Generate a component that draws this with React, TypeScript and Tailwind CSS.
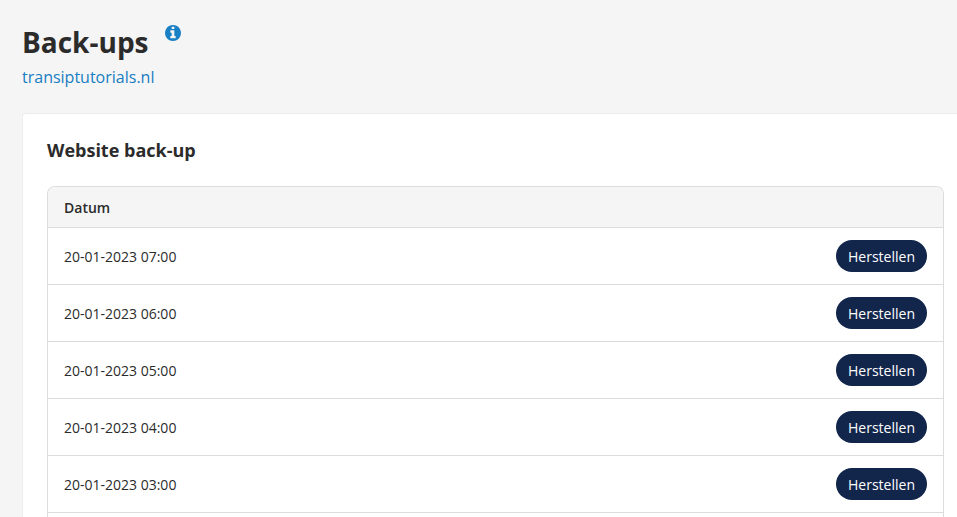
const backups = [
  '20-01-2023 07:00',
  '20-01-2023 06:00',
  '20-01-2023 05:00',
  '20-01-2023 04:00',
  '20-01-2023 03:00',
];

function InfoIcon() {
  return (
    <svg viewBox="0 128 1536 1536" className="size-4" fill="#1a80c6" aria-hidden="true">
      <path d="M1024 1376v-160q0-14-9-23t-23-9h-96v-512q0-14-9-23t-23-9h-320q-14 0-23 9t-9 23v160q0 14 9 23t23 9h96v320h-96q-14 0-23 9t-9 23v160q0 14 9 23t23 9h448q14 0 23-9t9-23zm-128-896v-160q0-14-9-23t-23-9h-192q-14 0-23 9t-9 23v160q0 14 9 23t23 9h192q14 0 23-9t9-23zm640 416q0 209-103 385.5t-279.5 279.5-385.5 103-385.5-103-279.5-279.5-103-385.5 103-385.5 279.5-279.5 385.5-103 385.5 103 279.5 279.5 103 385.5z" />
    </svg>
  );
}

export default function App() {
  return (
    <main className="flex min-h-screen flex-col bg-[#f5f5f5] pt-6 pl-[22px] font-['Open_Sans',sans-serif] text-[#2b2b2b]">
      <header>
        <div className="flex items-start gap-4">
          <h1 className="text-[28px] leading-9 font-bold">Back-ups</h1>
          <button type="button" aria-label="Informatie" className="mt-px">
            <InfoIcon />
          </button>
        </div>
        <a href="#" className="mt-[5px] inline-block text-base leading-6 text-[#187dc1]">
          transiptutorials.nl
        </a>
      </header>

      <section className="mt-6 flex flex-1 flex-col rounded-tl border-t border-l border-[#ececec] bg-white pt-6 pr-[13px] pl-6">
        <h2 className="text-lg leading-6 font-bold">Website back-up</h2>
        <div className="mt-6 flex-1 overflow-hidden rounded-t-lg border border-b-0 border-[#dcdcdc]">
          <table className="w-full text-sm">
            <thead>
              <tr className="h-[40px] border-b border-[#dcdcdc] bg-[#f5f5f5]">
                <th scope="col" className="px-4 pt-0.5 text-left font-semibold">Datum</th>
                <th scope="col" aria-label="Actie" />
              </tr>
            </thead>
            <tbody>
              {backups.map((date) => (
                <tr key={date} className="h-[57px] border-b border-[#dcdcdc]">
                  <td className="px-4 pt-0.5">{date}</td>
                  <td className="px-4 text-right">
                    <button
                      type="button"
                      className="h-8 rounded-full bg-[#12264b] px-3 pt-0.5 align-middle text-sm text-white"
                    >
                      Herstellen
                    </button>
                  </td>
                </tr>
              ))}
            </tbody>
          </table>
        </div>
      </section>
    </main>
  );
}
